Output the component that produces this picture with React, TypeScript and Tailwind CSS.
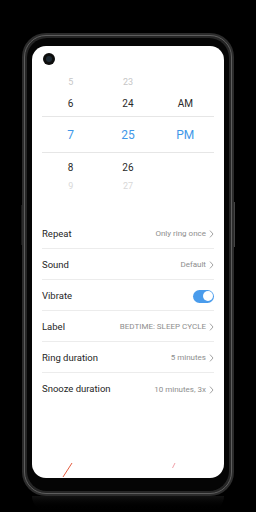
import React from "react";

function Chevron() {
  return (
    <svg width="5" height="8" viewBox="0 0 5 8" className="ml-[3px] shrink-0">
      <polyline points="1,0.6 4,4 1,7.4" fill="none" stroke="#9a9a9a" strokeWidth="0.9" />
    </svg>
  );
}

function Row({ label, value, last, children }: { label: string; value?: string; last?: boolean; children?: React.ReactNode }) {
  return (
    <div className={`h-[31px] flex items-center justify-between pt-[2px] ${last ? "" : "border-b border-[#ececec]"}`}>
      <span className="text-[9.5px] text-[#262626]">{label}</span>
      {children ?? (
        <span className="flex items-center text-[8px] text-[#8e8e8e]">
          {value}
          <Chevron />
        </span>
      )}
    </div>
  );
}

export default function App() {
  return (
    <div className="w-[256px] h-[512px] bg-black overflow-hidden pt-[33px] pl-[22px] font-[Roboto,'Noto_Sans',sans-serif]">
      <div className="relative w-[212px] h-[463px] rounded-[24px] bg-[#2c2c2c] p-[2px]">
        <div className="absolute -left-[1px] top-[172px] w-[1px] h-[40px] bg-[#1a1a1a]" />
        <div className="absolute -right-[1px] top-[169px] w-[1px] h-[45px] bg-[#444]" />
        <div className="h-full rounded-[22px] border border-[#5e5e5e] bg-[#262626] p-[2px]">
          <div className="h-full rounded-[20px] bg-[#050505] pt-[8px] px-[5px] pb-[13px]">
            <div className="relative h-full rounded-[14px] bg-white overflow-hidden px-[10px] pt-[27px]">
              <div className="absolute left-[11px] top-[7px] w-[12px] h-[12px] rounded-full bg-[#0d0d0d] flex items-center justify-center">
                <div className="w-[6px] h-[6px] rounded-full bg-[#1e2a33]" />
              </div>

              <div className="grid grid-cols-3 h-[20px] items-center text-center text-[9px] text-[#c6c6c6]">
                <span>5</span>
                <span>23</span>
                <span></span>
              </div>
              <div className="grid grid-cols-3 h-[20px] items-center text-center text-[10px] text-[#2a2a2a]">
                <span>6</span>
                <span>24</span>
                <span>AM</span>
              </div>
              <div className="mt-[3px] h-[37px] border-y border-[#e6e6e6] grid grid-cols-3 items-center text-center text-[12px] text-[#3f97e8]">
                <span>7</span>
                <span>25</span>
                <span>PM</span>
              </div>
              <div className="mt-[4px] grid grid-cols-3 h-[20px] items-center text-center text-[10px] text-[#2a2a2a]">
                <span>8</span>
                <span>26</span>
                <span></span>
              </div>
              <div className="grid grid-cols-3 h-[20px] items-center text-center text-[9px] text-[#d8d8d8]">
                <span>9</span>
                <span>27</span>
                <span></span>
              </div>

              <div className="mt-[21px]">
                <Row label="Repeat" value="Only ring once" />
                <Row label="Sound" value="Default" />
                <Row label="Vibrate">
                  <div className="w-[21px] h-[13px] rounded-full bg-[#4a9cec] flex items-center justify-end pr-[1.5px]">
                    <div className="w-[10px] h-[10px] rounded-full bg-white" />
                  </div>
                </Row>
                <Row label="Label" value="BEDTIME: SLEEP CYCLE" />
                <Row label="Ring duration" value="5 minutes" />
                <Row label="Snooze duration" value="10 minutes, 3x" last />
              </div>

              <svg className="absolute left-0 top-0 pointer-events-none" width="192" height="431">
                <line x1="40" y1="417" x2="31" y2="431" stroke="#e0401e" strokeWidth="1" opacity="0.85" />
                <line x1="143" y1="417" x2="140.5" y2="422" stroke="#f0a0a8" strokeWidth="1" />
              </svg>
            </div>
          </div>
        </div>
      </div>
      <div className="ml-[10px] w-[192px] h-[16px] bg-gradient-to-b from-[#121212] to-black rounded-b-[20px]" />
    </div>
  );
}
